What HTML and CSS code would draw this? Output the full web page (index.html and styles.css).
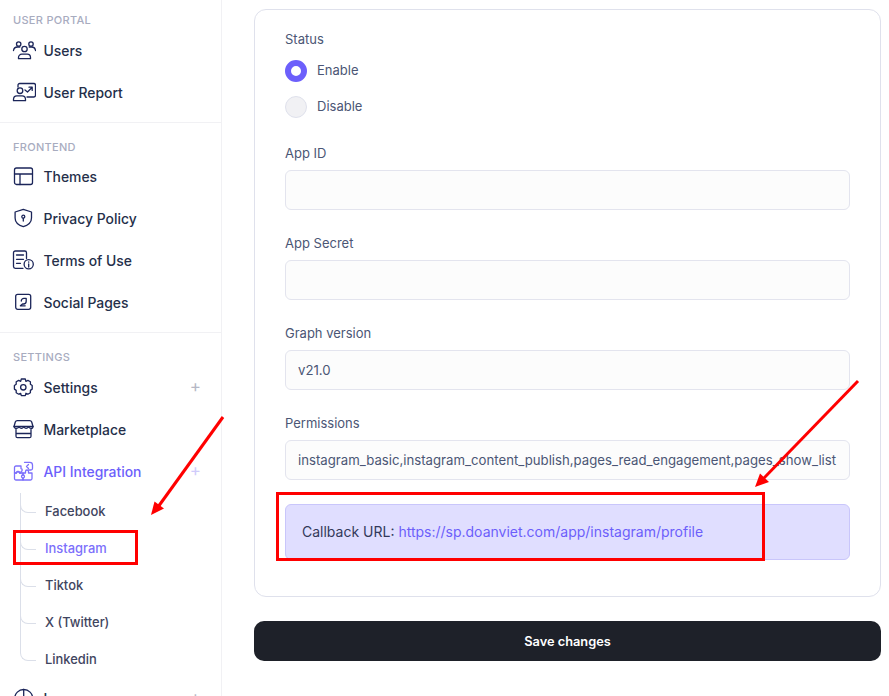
FILE: index.html
```html
<!DOCTYPE html>
<html lang="en">
<head>
<meta charset="utf-8">
<title>Instagram settings</title>
<link rel="stylesheet" href="styles.css">
</head>
<body>
<div class="page">
  <aside class="sidebar">
    <section class="group">
      <div class="group-title">User Portal</div>
      <a class="nav-item"><svg class="ico" viewBox="0 0 24 24"><circle cx="12.500" cy="10" r="2.700"/><path d="M6.500 19.700v-1.200c0-2 1.600-3.300 3.300-3.300h5.400c1.700 0 3.300 1.300 3.300 3.300v1.200z"/><circle cx="6.700" cy="5" r="2.200"/><circle cx="19" cy="5" r="2.200"/><path d="M1.500 11.500c.3-2.200 2-3.600 4.300-3.500h2M23.500 11.500c-.3-2.200-2-3.600-4.300-3.500h-2"/></svg><span>Users</span></a>
      <a class="nav-item"><svg class="ico" viewBox="0 0 24 24"><path d="M6 6V4.200C6 3.200 6.800 2.500 7.700 2.500h14.100c1 0 1.700.7 1.700 1.700v10.100c0 1-.7 1.700-1.700 1.700H15"/><circle cx="8" cy="9.700" r="2.800"/><path d="M1.500 19.700v-1.200c0-2 1.500-3.600 3.400-3.600h5.200c1.900 0 3.400 1.600 3.400 3.600v1.200zM13 9l2.500 2 4.500-4.500M17 6.200h3.200v3.200"/></svg><span>User Report</span></a>
    </section>
    <section class="group group-tight">
      <div class="group-title">Frontend</div>
      <a class="nav-item"><svg class="ico" viewBox="0 0 24 24"><rect x="2.500" y="3" width="18" height="16.500" rx="2"/><path d="M2.500 9h18M8 9v10.500"/></svg><span>Themes</span></a>
      <a class="nav-item"><svg class="ico" viewBox="0 0 24 24"><path d="M11.300 2.300l8.200 2.700v6c0 4.300-3.400 7.200-8.200 8.700-4.800-1.500-8.200-4.400-8.200-8.700V5z"/><circle cx="11.300" cy="9.700" r="1.500"/><path d="M11.300 11.200v2.800"/></svg><span>Privacy Policy</span></a>
      <a class="nav-item"><svg class="ico" viewBox="0 0 24 24"><path d="M14.500 9.500V3.800c0-1-.7-1.800-1.700-1.800H3.300c-1 0-1.800.8-1.800 1.800v13.700c0 1 .8 1.800 1.800 1.800h7.700"/><path d="M4.500 6h7M4.500 10.300h7M4.500 14.300h4"/><circle cx="16.700" cy="15.300" r="4.600"/><path d="M16.700 15v3M16.700 12.800v.4"/></svg><span>Terms of Use</span></a>
      <a class="nav-item"><svg class="ico" viewBox="0 0 24 24"><rect x="3.700" y="3.300" width="15" height="15" rx="2"/><path d="M9.300 10a2.600 2.600 0 0 1 2.600-2.700h2.300v3c0 1.500-1.200 2.700-2.700 2.700h-1l-2.100 1.800h4.800"/></svg><span>Social Pages</span></a>
    </section>
    <section class="group">
      <div class="group-title">Settings</div>
      <a class="nav-item"><svg class="ico" viewBox="0 0 24 24"><circle cx="11.300" cy="11.300" r="2.700"/><path d="M9.300 3h4l.6 2.300 2-.9 2.500 1.400 0 2.400 1.800 1.300v3.600l-1.800 1.300 0 2.400-2.500 1.400-2-.9-.6 2.300h-4l-.6-2.300-2 .9-2.500-1.400 0-2.400-1.800-1.300V9.500l1.800-1.300 0-2.400 2.500-1.400 2 .9z"/></svg><span>Settings</span><i class="plus">+</i></a>
      <a class="nav-item"><svg class="ico" viewBox="0 0 24 24"><path d="M5.300 2.700h12.400c1 0 1.700.5 2 1.300l1.300 4.500c0 1.200-.9 1.900-2 1.900s-1.900-.7-2.500-1.500c-.6.8-1.400 1.500-2.400 1.500s-1.700-.7-2.300-1.500c-.6.8-1.400 1.500-2.400 1.500S7.700 9.700 7 8.900c-.6.800-1.400 1.500-2.500 1.500S2 9.700 2 8.500L3.300 4c.3-.8 1-1.300 2-1.300z"/><path d="M2 8.500h19M4 11.500v6.700c0 .8.700 1.500 1.500 1.500h12c.8 0 1.500-.7 1.500-1.500v-6.700M4 15.500h15"/></svg><span>Marketplace</span></a>
      <a class="nav-item is-active"><svg class="ico" viewBox="0 0 24 24"><path d="M2.500 7.500c0-.8.600-1.500 1.500-1.500h5v2.500a1.600 1.600 0 0 1 0 3.100V13H7.500a1.500 1.500 0 0 0-3 0h-2z"/><path d="M2.500 13h2a1.500 1.500 0 0 1 3 0H11v2a1.500 1.500 0 0 0 0 3v2H4c-.9 0-1.500-.6-1.500-1.500z"/><path d="M11 13h2.500v-1.500a1.500 1.500 0 0 1 3 0V13h3.500v5.500c0 .9-.6 1.500-1.500 1.500H11v-2a1.500 1.500 0 0 0 0-3z"/><path d="M12.500 2.300h5.300c1.500 0 2.700 1.200 2.700 2.700v3.500c0 1-.8 1.500-1.700 1.500h-2M16.500 4.500l-2 2 2 2"/></svg><span>API Integration</span><i class="plus">+</i></a>
      <ul class="subnav">
        <li class="sub-item">Facebook</li>
        <li class="sub-item is-current">Instagram</li>
        <li class="sub-item">Tiktok</li>
        <li class="sub-item">X (Twitter)</li>
        <li class="sub-item">Linkedin</li>
      </ul>
      <a class="nav-item"><svg class="ico" viewBox="0 0 24 24"><circle cx="11.700" cy="11.500" r="9"/><path d="M11.700 2.500v9l-4.500 6M11.700 11.500h9"/></svg><span>Language</span><i class="plus">+</i></a>
    </section>
  </aside>

  <main class="content">
    <form class="card">
      <div class="label">Status</div>
      <div class="radios">
        <div class="radio-row"><span class="radio radio-on"></span><span class="radio-text">Enable</span></div>
        <div class="radio-row"><span class="radio"></span><span class="radio-text">Disable</span></div>
      </div>
      <div class="field"><div class="label">App ID</div><input class="input" type="text" value=""></div>
      <div class="field"><div class="label">App Secret</div><input class="input" type="text" value=""></div>
      <div class="field"><div class="label">Graph version</div><input class="input" type="text" value="v21.0"></div>
      <div class="field field-last"><div class="label">Permissions</div><input class="input" type="text" value="instagram_basic,instagram_content_publish,pages_read_engagement,pages_show_list"></div>
      <div class="callback">Callback URL: <a class="callback-link">https://sp.doanviet.com/app/instagram/profile</a></div>
    </form>
    <button class="save" type="button">Save changes</button>
  </main>
</div>

<svg class="marks" width="889" height="696" viewBox="0 0 889 696">
  <rect class="mark-box" x="14.500" y="531.500" width="122" height="32"/>
  <rect class="mark-box" x="277.500" y="493.500" width="486" height="66"/>
  <path class="mark-line" d="M223 417L158 507"/>
  <path class="mark-head" d="M151 515L154.500 501.500L164 508.500z"/>
  <path class="mark-line" d="M858 381L763 479"/>
  <path class="mark-head" d="M755 487L760 473.500L769 482z"/>
</svg>
</body>
</html>
```

FILE: styles.css
```css
* { box-sizing: border-box; }

html, body {
  margin: 0;
  height: 696px;
  overflow: hidden;
  background: #fff;
}

body {
  position: relative;
  font-family: Inter, "Liberation Sans", sans-serif;
  color: #252f4a;
}

.page {
  display: flex;
  width: 889px;
  height: 696px;
}

.sidebar {
  flex: 0 0 222px;
  height: 696px;
  overflow: hidden;
  border-right: 1px solid #f1f1f4;
}

.group {
  padding: 16px 0 8px;
  border-bottom: 1px solid #f1f1f4;
}

.group:first-child { padding-top: 12px; }
.group:last-child { border-bottom: 0; }

.group-title {
  height: 16px;
  margin: 0 0 2px 13px;
  font-size: 11px;
  line-height: 16px;
  font-weight: 500;
  letter-spacing: .3px;
  text-transform: uppercase;
  color: #a8acbf;
}

.group-tight .group-title { margin-bottom: 1px; }

.nav-item {
  display: flex;
  align-items: center;
  height: 42px;
  padding: 0 20px 0 12px;
  font-size: 13.9px;
  font-weight: 500;
  color: #252f4a;
}

.nav-item span {
  flex: 1;
  margin: 0 0 0 7.500px;
}

.ico {
  flex: 0 0 24px;
  width: 24px;
  height: 24px;
  fill: none;
  stroke: #1b2559;
  stroke-width: 1.300;
  stroke-linejoin: round;
  stroke-linecap: round;
}

.plus {
  margin-bottom: 3px;
  font-style: normal;
  font-weight: 400;
  font-size: 17px;
  line-height: 1;
  color: #b5b7c5;
}

.is-active { color: #6c5ffb; }
.is-active .ico { stroke: #7c70fb; }
.is-active .plus { color: #cfcbfb; }

.subnav {
  position: relative;
  list-style: none;
  margin: 0;
  padding: 0 0 0 45px;
}

.subnav::before {
  content: "";
  position: absolute;
  left: 20px;
  top: 0;
  height: 158px;
  border-left: 1px solid #dbdfe9;
}

.sub-item {
  position: relative;
  height: 37px;
  font-size: 12.9px;
  font-weight: 500;
  line-height: 37px;
  color: #3f4560;
}

.sub-item::before {
  content: "";
  position: absolute;
  left: -25px;
  top: 10px;
  width: 15px;
  height: 9px;
  border-left: 1px solid #dbdfe9;
  border-bottom: 1px solid #dbdfe9;
  border-bottom-left-radius: 8px;
}

.is-current { color: #7c6ffb; }

.content {
  flex: 1;
  min-width: 0;
  padding: 9px 8px 0 32px;
}

.card {
  height: 588px;
  padding: 19px 30px 0;
  border: 1px solid #dfe1ec;
  border-radius: 12px;
}

.label {
  height: 20px;
  font-size: 13px;
  line-height: 20px;
  font-weight: 400;
  color: #4b5675;
}

.radios {
  display: flex;
  flex-direction: column;
  gap: 14px;
  margin-top: 11px;
}

.radio-row {
  display: flex;
  align-items: center;
  gap: 10px;
  font-size: 13px;
  color: #4b5675;
}

.radio-text { margin-bottom: 2px; }

.radio {
  width: 22px;
  height: 22px;
  border-radius: 50%;
  border: 1px solid #dfe1ec;
  background: #f1f1f4;
}

.radio-on {
  border: 6px solid #6c5ffb;
  background: #fff;
}

.field { margin-top: 25px; }
.field + .field { margin-top: 23px; }
.field-last { margin-bottom: 24px; }

.input {
  display: block;
  width: 100%;
  height: 40px;
  margin-top: 7px;
  padding: 0 12px;
  border: 1px solid #e3e4ee;
  border-radius: 6px;
  background: #fcfcfc;
  font-family: inherit;
  font-size: 13.2px;
  color: #4b5675;
}

.callback {
  height: 56px;
  padding: 0 16px;
  border: 1px solid #c9c6fb;
  border-radius: 6px;
  background: #e0deff;
  font-size: 14px;
  line-height: 54px;
  color: #33395a;
}

.callback-link { color: #6c5ffb; }

.save {
  display: block;
  width: 100%;
  height: 40px;
  margin-top: 24px;
  border: 0;
  border-radius: 10px;
  background: #1e2129;
  color: #fff;
  font-family: inherit;
  font-size: 12.8px;
  font-weight: 600;
}

.marks {
  position: absolute;
  left: 0;
  top: 0;
  pointer-events: none;
}

.mark-box {
  fill: none;
  stroke: #ff0000;
  stroke-width: 3px;
}

.mark-line {
  fill: none;
  stroke: #ff0000;
  stroke-width: 3px;
}

.mark-head { fill: #ff0000; }
```
